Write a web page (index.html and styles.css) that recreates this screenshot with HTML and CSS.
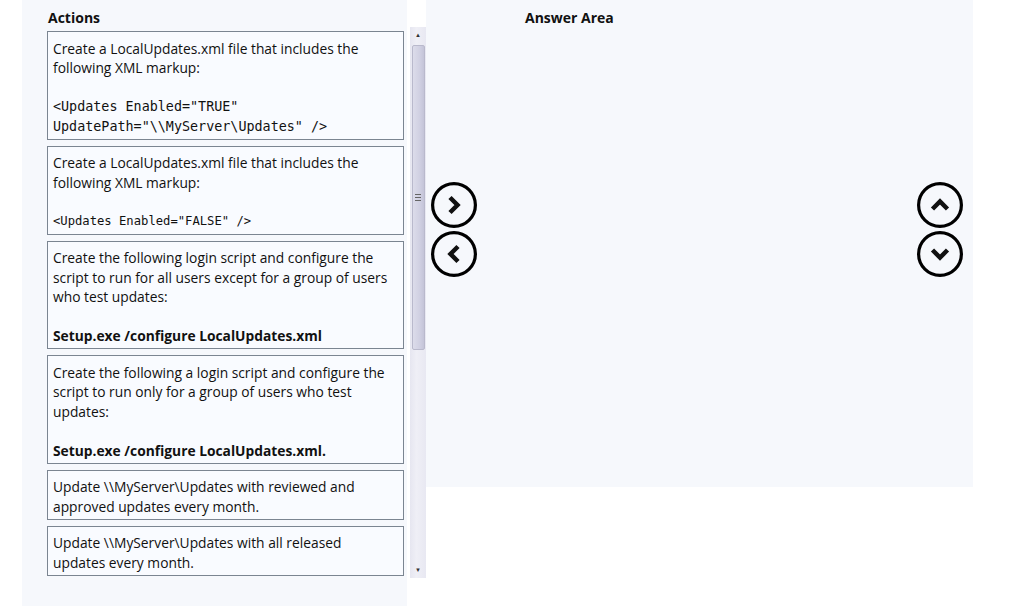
FILE: index.html
```html
<!DOCTYPE html>
<html lang="en">
<head>
    <meta charset="utf-8">
    <title>Actions - Answer Area</title>
    <link rel="stylesheet" href="styles.css">
</head>
<body>
    <div class="board">
        <div class="actions">
            <h2 class="title">Actions</h2>
            <div class="list">
                <div class="card">
                    <div>Create a LocalUpdates.xml file that includes the following XML markup:</div>
                    <div class="code">&lt;Updates Enabled="TRUE"<br>UpdatePath="\\MyServer\Updates" /&gt;</div>
                </div>
                <div class="card">
                    <div>Create a LocalUpdates.xml file that includes the following XML markup:</div>
                    <div class="code small">&lt;Updates Enabled="FALSE" /&gt;</div>
                </div>
                <div class="card">
                    <div>Create the following login script and configure the script to run for all users except for a group of users who test updates:</div>
                    <div class="cmd">Setup.exe /configure LocalUpdates.xml</div>
                </div>
                <div class="card">
                    <div>Create the following a login script and configure the script to run only for a group of users who test updates:</div>
                    <div class="cmd">Setup.exe /configure LocalUpdates.xml.</div>
                </div>
                <div class="card">
                    <div>Update \\MyServer\Updates with reviewed and approved updates every month.</div>
                </div>
                <div class="card">
                    <div>Update \\MyServer\Updates with all released updates every month.</div>
                </div>
            </div>
        </div>

        <div class="scroll-col">
            <div class="scrollbar">
                <span class="scroll-arrow">&#9650;</span>
                <div class="thumb"><span class="grip"></span></div>
                <span class="scroll-arrow down">&#9660;</span>
            </div>
        </div>

        <div class="answer">
            <h2 class="title answer-title">Answer Area</h2>
            <div class="answer-body">
                <div class="btn-col">
                    <button class="round-btn" title="Move right">
                        <svg viewBox="0 0 46 46" width="46" height="46"><circle cx="23" cy="23" r="21.4"/><polyline points="19,15.5 26.5,23 19,30.5"/></svg>
                    </button>
                    <button class="round-btn" title="Move left">
                        <svg viewBox="0 0 46 46" width="46" height="46"><circle cx="23" cy="23" r="21.4"/><polyline points="27,15.5 19.5,23 27,30.5"/></svg>
                    </button>
                </div>
                <div class="btn-col">
                    <button class="round-btn" title="Move up">
                        <svg viewBox="0 0 46 46" width="46" height="46"><circle cx="23" cy="23" r="21.4"/><polyline points="15.5,27 23,19.5 30.5,27"/></svg>
                    </button>
                    <button class="round-btn" title="Move down">
                        <svg viewBox="0 0 46 46" width="46" height="46"><circle cx="23" cy="23" r="21.4"/><polyline points="15.5,19 23,26.5 30.5,19"/></svg>
                    </button>
                </div>
            </div>
        </div>
    </div>
</body>
</html>
```

FILE: styles.css
```css
body {
    margin: 0;
    background-color: #ffffff;
    font-family: "Open Sans", "Noto Sans", sans-serif;
    font-size: 13.8px;
    color: #111;
}

.board {
    display: flex;
    align-items: flex-start;
}

.title {
    margin: 0;
    font-size: 14px;
    font-weight: bold;
    line-height: 20px;
    color: #111;
}

/* left column with the action cards */
.actions {
    width: 360px;
    height: 600px;
    margin-left: 22px;
    padding-left: 25px;
    padding-top: 8px;
    background-color: #f6f8fc;
}

.actions .title {
    padding-left: 1px;
    margin-bottom: 3px;
}

.list {
    width: 357px;
    display: flex;
    flex-direction: column;
    gap: 6px;
}

.card {
    padding: 6.5px 10px 2.5px 5px;
    border: 1px solid #7b8591;
    background-color: #f9fbff;
    line-height: 19.5px;
}

.code {
    margin-top: 19.5px;
    font-family: "DejaVu Sans Mono", "Liberation Mono", monospace;
    font-size: 13.4px;
}

.code.small {
    font-size: 12.2px;
}

.cmd {
    margin-top: 19.5px;
    font-weight: bold;
}

/* fake scrollbar */
.scroll-col {
    padding-top: 27px;
    margin-left: 3px;
}

.scrollbar {
    width: 16px;
    height: 551px;
    display: flex;
    flex-direction: column;
    align-items: center;
    background: linear-gradient(to right, #e6e6f0, #efeff6 40%, #e8e8f2);
}

.scroll-arrow {
    font-size: 6px;
    line-height: 16px;
    height: 16px;
    color: #333;
}

.scroll-arrow.down {
    margin-top: auto;
}

.thumb {
    width: 13px;
    height: 305px;
    margin-top: 2px;
    box-sizing: border-box;
    border: 1px solid #b9b9cc;
    border-radius: 2px;
    background: linear-gradient(to right, #dcdcea, #d0d0e2 60%, #c4c4d8);
    display: flex;
    align-items: center;
    justify-content: center;
}

.grip {
    width: 6px;
    height: 5px;
    border-top: 1px solid #666;
    border-bottom: 1px solid #666;
    position: relative;
}

.grip::after {
    content: "";
    position: absolute;
    left: 0;
    right: 0;
    top: 2px;
    border-top: 1px solid #666;
}

/* right answer area */
.answer {
    width: 547px;
    height: 487px;
    padding-top: 8px;
    box-sizing: border-box;
    background-color: #f6f8fc;
}

.answer-title {
    padding-left: 99px;
}

.answer-body {
    display: flex;
    justify-content: space-between;
    padding: 0 10px 0 5px;
    margin-top: 154px;
}

.btn-col {
    display: flex;
    flex-direction: column;
    gap: 3px;
}

.round-btn {
    padding: 0;
    border: none;
    background: none;
    width: 46px;
    height: 46px;
    cursor: pointer;
}

.round-btn svg {
    display: block;
}

.round-btn circle {
    fill: none;
    stroke: #000;
    stroke-width: 3.2;
}

.round-btn polyline {
    fill: none;
    stroke: #111;
    stroke-width: 4.5;
    stroke-linejoin: miter;
}
```
